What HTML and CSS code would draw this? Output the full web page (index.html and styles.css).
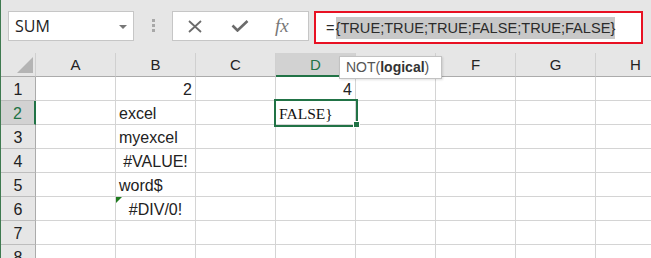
FILE: index.html
```html
<!DOCTYPE html>
<html lang="en">
<head>
    <meta charset="UTF-8">
    <title>Excel - NOT</title>
    <link rel="stylesheet" href="styles.css">
</head>
<body>
<div class="window">
    <div class="toolbar">
        <div class="namebox"><span>SUM</span><span class="caret"></span></div>
        <div class="grip"><i></i><i></i><i></i></div>
        <div class="fnbox">
            <svg class="ico" width="16" height="13" viewBox="0 0 16 13"><path d="M2 1 L14 12 M14 1 L2 12" stroke="#6b6b6b" stroke-width="1.8" fill="none"/></svg>
            <svg class="ico" width="18" height="12" viewBox="0 0 18 12"><path d="M1.5 5.5 L6.5 10.5 L16.5 1" stroke="#6b6b6b" stroke-width="2.6" fill="none"/></svg>
            <span class="fx">fx</span>
        </div>
        <div class="formula"><span class="eq">=</span><span class="sel">{TRUE;TRUE;TRUE;FALSE;TRUE;FALSE}</span></div>
    </div>

    <div class="sheet">
        <div class="grid">
            <div class="hd corner"><span class="tri"></span></div>
            <div class="hd">A</div><div class="hd">B</div><div class="hd">C</div>
            <div class="hd active">D</div><div class="hd">E</div><div class="hd">F</div>
            <div class="hd">G</div><div class="hd">H</div>

            <div class="rh">1</div>
            <div></div><div class="num">2</div><div></div><div class="num">4</div>
            <div></div><div></div><div></div><div></div>

            <div class="rh active">2</div>
            <div></div><div>excel</div><div></div><div class="cur">FALSE}</div>
            <div></div><div></div><div></div><div></div>

            <div class="rh">3</div>
            <div></div><div>myexcel</div><div></div><div></div>
            <div></div><div></div><div></div><div></div>

            <div class="rh">4</div>
            <div></div><div class="err">#VALUE!</div><div></div><div></div>
            <div></div><div></div><div></div><div></div>

            <div class="rh">5</div>
            <div></div><div>word$</div><div></div><div></div>
            <div></div><div></div><div></div><div></div>

            <div class="rh">6</div>
            <div></div><div class="err flag">#DIV/0!</div><div></div><div></div>
            <div></div><div></div><div></div><div></div>

            <div class="rh">7</div>
            <div></div><div></div><div></div><div></div>
            <div></div><div></div><div></div><div></div>

            <div class="rh">8</div>
            <div></div><div></div><div></div><div></div>
            <div></div><div></div><div></div><div></div>
        </div>

        <div class="tip">NOT(<b>logical</b>)</div>
    </div>
</div>
</body>
</html>
```

FILE: styles.css
```css
body {
    margin: 0;
    font-family: 'Liberation Sans', Arial, sans-serif;
    color: #222;
}

.window {
    width: 651px;
    height: 258px;
    overflow: hidden;
    background-color: #e6e6e6;
    border-left: 1px solid #3f7a50;
    box-sizing: border-box;
}

/* formula bar */
.toolbar {
    height: 53px;
    display: flex;
    align-items: flex-start;
    padding: 11px 0 0 7px;
    box-sizing: border-box;
}

.namebox {
    width: 126px;
    height: 30px;
    background-color: #fff;
    border: 1px solid #c6c6c6;
    box-sizing: border-box;
    display: flex;
    align-items: center;
    justify-content: space-between;
    padding: 0 6px 0 6px;
    font-family: 'Open Sans', sans-serif;
    font-size: 16px;
    color: #222;
}

.caret {
    width: 0;
    height: 0;
    border-left: 4px solid transparent;
    border-right: 4px solid transparent;
    border-top: 4px solid #777;
    margin-top: 1px;
}

.grip {
    display: flex;
    flex-direction: column;
    gap: 2px;
    margin: 8px 0 0 18px;
}

.grip i {
    display: block;
    width: 3px;
    height: 3px;
    background-color: #a8a8a8;
}

.fnbox {
    width: 137px;
    height: 30px;
    margin-left: 17px;
    background-color: #fff;
    border: 1px solid #c6c6c6;
    box-sizing: border-box;
    display: flex;
    align-items: center;
    padding-left: 14px;
    gap: 28px;
}

.fnbox .ico {
    display: block;
}

.fx {
    font-family: 'Liberation Serif', serif;
    font-style: italic;
    font-size: 19px;
    color: #777;
    margin-left: -2px;
}

.formula {
    width: 329px;
    height: 33px;
    margin-left: 5px;
    background-color: #fff;
    border: 2px solid #e81123;
    box-sizing: border-box;
    display: flex;
    align-items: center;
    padding-left: 10px;
    font-size: 14.6px;
    color: #2b2b2b;
}

.formula .sel {
    background-color: #c8c8c8;
    line-height: 22px;
    margin-left: 1px;
}

/* grid */
.sheet {
    position: relative;
}

.grid {
    display: grid;
    grid-template-columns: 35px repeat(8, 80px);
    grid-auto-rows: 24px;
}

.grid > div {
    position: relative;
    background-color: #fff;
    border-right: 1px solid #d4d4d4;
    border-bottom: 1px solid #d4d4d4;
    box-sizing: border-box;
    padding: 1px 3px 0;
    line-height: 23px;
    font-size: 16px;
    white-space: nowrap;
}

.grid > .hd {
    background-color: #e6e6e6;
    border-right-color: #d0d0d0;
    border-bottom-color: #ababab;
    text-align: center;
    font-size: 15px;
    padding-top: 0;
}

.grid > .rh {
    background-color: #e6e6e6;
    border-right-color: #ababab;
    border-bottom-color: #bdbdbd;
    text-align: center;
    padding: 1px 0 0;
}

.grid > .hd.active {
    background-color: #d2d2d2;
    color: #217346;
    border-bottom: 2px solid #217346;
}

.grid > .rh.active {
    background-color: #d2d2d2;
    color: #217346;
    border-right: 2px solid #217346;
}

.corner .tri {
    position: absolute;
    right: 2px;
    bottom: 3px;
    width: 16px;
    height: 16px;
    background-color: #b4b4b4;
    clip-path: polygon(100% 0, 100% 100%, 0 100%);
}

.grid > .num {
    text-align: right;
}

.grid > .err {
    text-align: center;
}

.flag::before {
    content: "";
    position: absolute;
    left: 0;
    top: 0;
    border-top: 6px solid #1e7b1e;
    border-right: 6px solid transparent;
}

.grid > .cur {
    outline: 2px solid #217346;
    font-family: 'Liberation Serif', serif;
    font-size: 15.5px;
    color: #111;
    z-index: 1;
}

.cur::after {
    content: "";
    position: absolute;
    right: -5px;
    bottom: -4px;
    width: 5px;
    height: 5px;
    background-color: #217346;
    border: 1px solid #fff;
}

.tip {
    position: absolute;
    left: 338px;
    top: 3px;
    width: 103px;
    height: 23px;
    box-sizing: border-box;
    background-color: #fff;
    border: 1px solid #c2c2c2;
    box-shadow: 1px 1px 2px rgba(0, 0, 0, 0.12);
    font-size: 14px;
    line-height: 21px;
    padding-left: 6px;
    color: #555;
}

.tip b {
    color: #333;
}
```
